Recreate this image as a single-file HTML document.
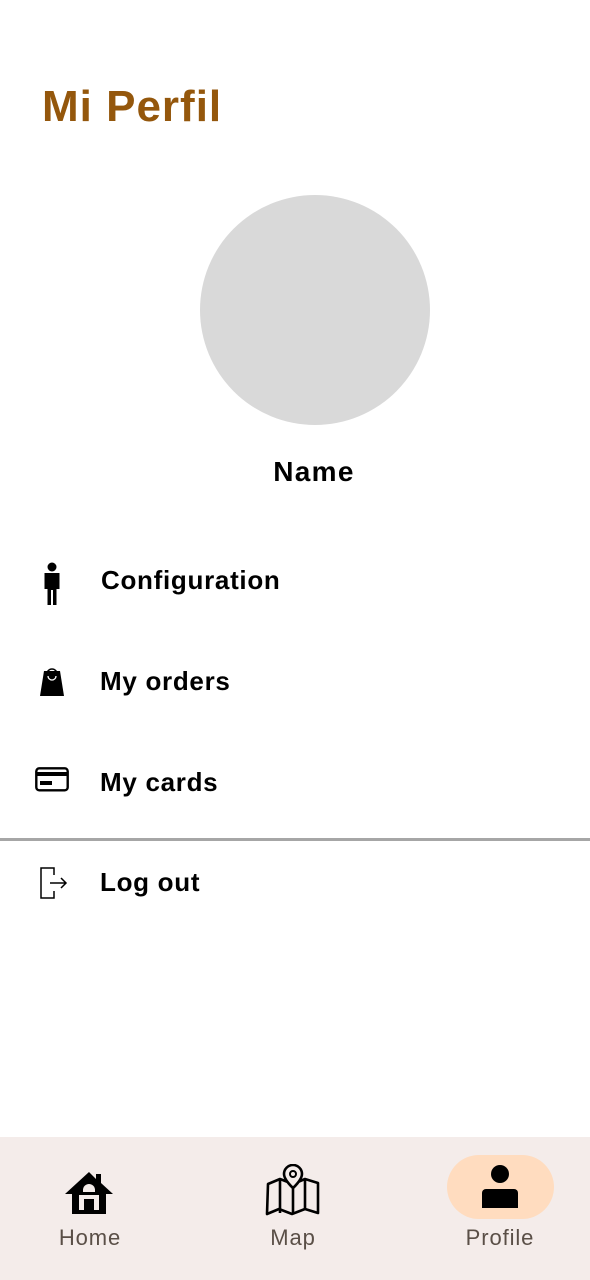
<!DOCTYPE html>
<html><head><style>
body{margin:0;width:590px;height:1280px;position:relative;background:#fff;font-family:"Liberation Sans",sans-serif;overflow:hidden}
.a{position:absolute}
.t{font-weight:bold;font-size:26px;color:#000;letter-spacing:0.7px}
.n{font-size:22px;color:#5a4f47;letter-spacing:0.9px}
</style></head><body>
<div class="a" style="left:42px;top:82px;font-size:44px;font-weight:bold;color:#94570c;letter-spacing:1px">Mi Perfil</div>
<div class="a" style="left:200px;top:195px;width:230px;height:230px;border-radius:50%;background:#d9d9d9"></div>
<div class="a t" style="left:0;width:628px;text-align:center;top:456px;font-size:28px;letter-spacing:1.3px">Name</div>
<svg class="a" style="left:40px;top:562px" width="24" height="44" viewBox="0 0 24 44"><circle cx="12" cy="5" r="4.5"/><path d="M4.5 11h15v16h-3v16h-3.5V28h-2v15H7.5V27h-3z"/></svg>
<div class="a t" style="left:101px;top:565px">Configuration</div>
<svg class="a" style="left:38px;top:664px" width="28" height="34" viewBox="0 0 28 34"><path d="M9 10a5 5 0 0 1 10 0" fill="none" stroke="#000" stroke-width="1.5"/><path d="M6 7h16l4 25H2z"/><path d="M10 12a4 4 0 0 0 8 0" fill="none" stroke="#fff" stroke-width="1.3"/></svg>
<div class="a t" style="left:100px;top:666px">My orders</div>
<svg class="a" style="left:35px;top:767px" width="34" height="26" viewBox="0 0 34 26"><rect x="1.3" y="1.3" width="31.4" height="22" rx="3" fill="none" stroke="#000" stroke-width="2.4"/><rect x="1" y="5" width="32" height="4"/><rect x="5" y="14" width="12" height="4"/></svg>
<div class="a t" style="left:100px;top:767px">My cards</div>
<div class="a" style="left:0;top:838px;width:590px;height:3px;background:#a6a6a6"></div>
<svg class="a" style="left:40px;top:867px" width="28" height="32" viewBox="0 0 28 32"><path d="M14 8V1H1v30h13v-7" fill="none" stroke="#000" stroke-width="1.5"/><path d="M10 16h16M21 11l5 5-5 5" fill="none" stroke="#000" stroke-width="1.5"/></svg>
<div class="a t" style="left:100px;top:867px">Log out</div>
<div class="a" style="left:0;top:1137px;width:590px;height:143px;background:#f4ecea"></div>
<svg class="a" style="left:63px;top:1170px" width="52" height="46" viewBox="0 0 52 46"><path d="M26 2L2 24h7v20h12V32h10v12h12V24h7L38 13V4h-5v5z"/><path d="M20 20a6 6 0 0 1 12 0v2H20z" fill="#f4ecea"/><rect x="16" y="25" width="20" height="15" fill="#f4ecea"/><rect x="21" y="29" width="10" height="15"/></svg>
<div class="a n" style="left:0;width:180px;text-align:center;top:1225px">Home</div>
<svg class="a" style="left:264px;top:1164px" width="58" height="54" viewBox="0 0 58 54"><path d="M4 20l12-5 13 5 12-5 13 4v30l-13-4-13 5-13-5-12 5z" fill="none" stroke="#000" stroke-width="2.6" stroke-linejoin="round"/><path d="M16 15v34M29 20v29M41 15v30" stroke="#000" stroke-width="2.6"/><path d="M38 10a9 9 0 0 0-18 0c0 6 9 14 9 14s9-8 9-14z" fill="#f4ecea" stroke="#000" stroke-width="2.6"/><circle cx="29" cy="10" r="3" fill="none" stroke="#000" stroke-width="2"/></svg>
<div class="a n" style="left:203px;width:180px;text-align:center;top:1225px">Map</div>
<div class="a" style="left:447px;top:1155px;width:107px;height:64px;border-radius:32px;background:#ffdcbf"></div>
<svg class="a" style="left:478px;top:1163px" width="44" height="48" viewBox="0 0 44 48"><circle cx="22" cy="11" r="9"/><path d="M4 30a4 4 0 0 1 4-4h28a4 4 0 0 1 4 4v15H4z"/></svg>
<div class="a n" style="left:410px;width:180px;text-align:center;top:1225px">Profile</div>
</body></html>
